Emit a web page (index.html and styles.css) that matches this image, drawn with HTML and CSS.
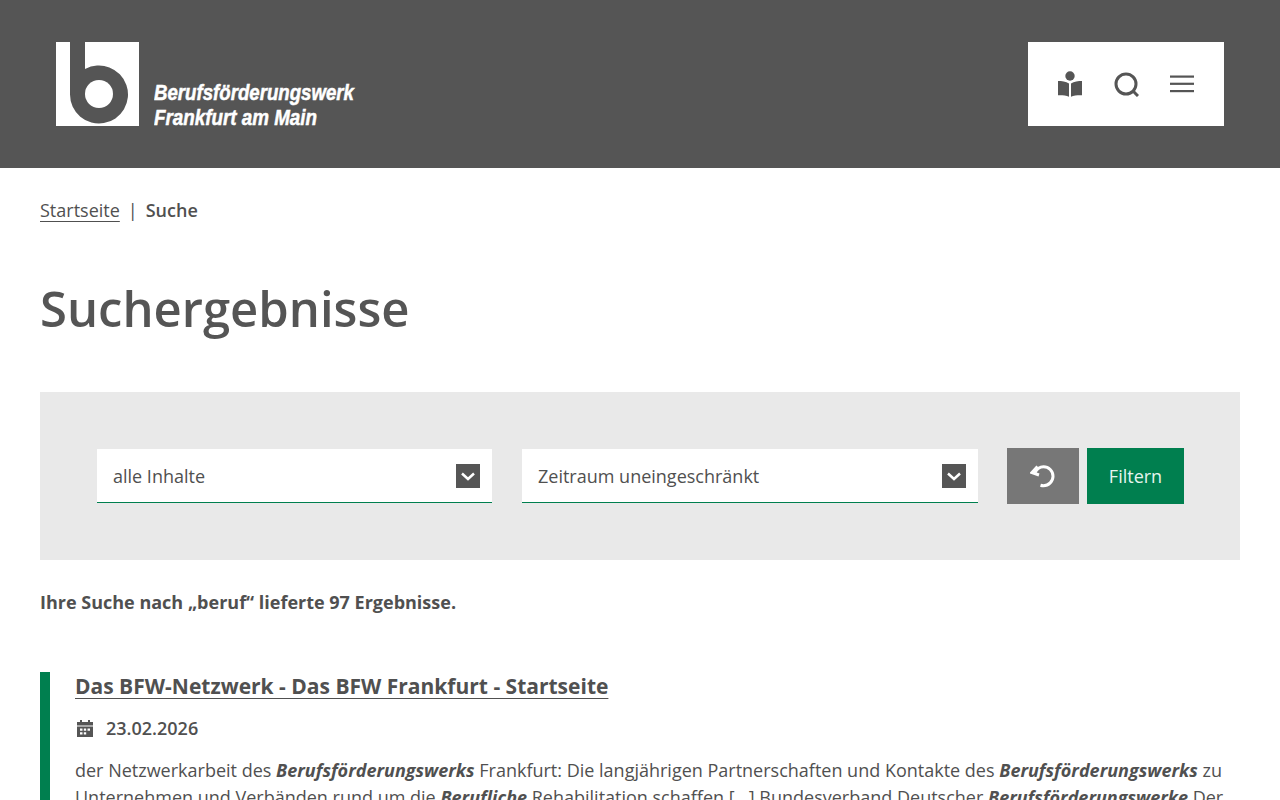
FILE: index.html
```html
<!DOCTYPE html>
<html lang="de">
<head>
<meta charset="utf-8">
<title>Suchergebnisse</title>
<link rel="stylesheet" href="styles.css">
</head>
<body>
<header class="site-header">
  <a class="logo" href="#">
    <svg class="logo-mark" width="83" height="84" viewBox="0 0 83 84">
      <rect width="83" height="84" fill="#fff"/>
      <path fill="#555" d="M14 0H29V27.100A29 29 0 1 1 14 52.500Z"/>
      <circle cx="43" cy="52" r="14" fill="#fff"/>
    </svg>
    <svg class="logo-text" width="204" height="58" viewBox="0 0 204 58">
      <text class="logo-line" x="0" y="24" textLength="200" lengthAdjust="spacingAndGlyphs">Berufsförderungswerk</text>
      <text class="logo-line" x="0" y="49" textLength="163" lengthAdjust="spacingAndGlyphs">Frankfurt am Main</text>
    </svg>
  </a>
  <nav class="tools">
    <a class="tool" href="#" aria-label="Lesen">
      <svg width="26" height="26" viewBox="0 0 26 26" fill="#555">
        <circle cx="13" cy="5" r="4.700"/>
        <path d="M1 10C4.500 10 9 10.500 12 12.500V25.700C9 24.300 4.500 24 1 24.200Z"/>
        <path d="M25 10C21.500 10 17 10.500 14 12.500V25.700C17 24.300 21.500 24 25 24.200Z"/>
      </svg>
    </a>
    <a class="tool" href="#" aria-label="Suche">
      <svg width="26" height="26" viewBox="0 0 26 26" fill="none" stroke="#555">
        <circle cx="13" cy="13" r="10" stroke-width="3"/>
        <path d="M20 20L25 25" stroke-width="3"/>
      </svg>
    </a>
    <a class="tool" href="#" aria-label="Menü">
      <svg width="26" height="26" viewBox="0 0 26 26" fill="#555">
        <rect x="1" y="4.500" width="24" height="2.200"/>
        <rect x="1" y="11.700" width="24" height="2.200"/>
        <rect x="1" y="19" width="24" height="2.200"/>
      </svg>
    </a>
  </nav>
</header>

<main class="content">
  <nav class="crumbs">
    <a class="crumb-link" href="#">Startseite</a>
    <span class="crumb-sep">|</span>
    <strong class="crumb-current">Suche</strong>
  </nav>

  <h1 class="page-title">Suchergebnisse</h1>

  <form class="filter">
    <div class="select select-type">
      <span>alle Inhalte</span>
      <span class="select-arrow">
        <svg width="24" height="24" viewBox="0 0 24 24" fill="none" stroke="#fff" stroke-width="2.500"><path d="M6 9.500L12 15L18 9.500"/></svg>
      </span>
    </div>
    <div class="select select-range">
      <span>Zeitraum uneingeschränkt</span>
      <span class="select-arrow">
        <svg width="24" height="24" viewBox="0 0 24 24" fill="none" stroke="#fff" stroke-width="2.500"><path d="M6 9.500L12 15L18 9.500"/></svg>
      </span>
    </div>
    <div class="buttons">
      <button class="btn btn-reset" type="button" aria-label="Zurücksetzen">
        <svg width="26" height="26" viewBox="0 0 26 26" fill="none" stroke="#fff" stroke-width="3">
          <path d="M5 9.500C7 5.500 10 3.700 13.500 3.700A9.500 9.500 0 0 1 13.500 22.700C12.500 22.700 11.500 22.500 10.500 22.200"/>
          <path d="M7.500 3.500L2 9.500L9 12"/>
        </svg>
      </button>
      <button class="btn btn-submit" type="button">Filtern</button>
    </div>
  </form>

  <p class="summary">Ihre Suche nach „beruf“ lieferte 97 Ergebnisse.</p>

  <article class="result">
    <h2 class="result-title"><a href="#">Das BFW-Netzwerk - Das BFW Frankfurt - Startseite</a></h2>
    <p class="result-date">
      <svg class="date-icon" width="16" height="17" viewBox="0 0 16 17" fill="#555">
        <path d="M3 0H5V2H11V0H13V2H16V5.500H0V2H3Z"/>
        <path fill-rule="evenodd" d="M0 6.500H16V17H0ZM3 8.500V10.800H5.500V8.500ZM6.800 8.500V10.800H9.200V8.500ZM10.500 8.500V10.800H13V8.500ZM3 12.300V14.600H5.500V12.300ZM6.800 12.300V14.600H9.200V12.300Z"/>
      </svg>
      <span>23.02.2026</span>
    </p>
    <p class="result-text">der Netzwerkarbeit des <b>Berufsförderungswerks</b> Frankfurt: Die langjährigen Partnerschaften und Kontakte des <b>Berufsförderungswerks</b> zu Unternehmen und Verbänden rund um die <b>Berufliche</b> Rehabilitation schaffen [...] Bundesverband Deutscher <b>Berufsförderungswerke</b> Der</p>
  </article>
</main>
</body>
</html>
```

FILE: styles.css
```css
* {
  box-sizing: border-box;
}

body {
  margin: 0;
  background: #fff;
  color: #505050;
  font-family: "Open Sans", sans-serif;
  font-size: 18px;
  line-height: 28px;
}

a {
  color: inherit;
}

.site-header {
  height: 168px;
  background: #555;
  padding: 42px 56px;
  display: flex;
  justify-content: space-between;
}

.logo {
  display: flex;
  align-items: flex-start;
  gap: 15px;
  text-decoration: none;
}

.logo-text {
  margin-top: 34px;
}

.logo-line {
  fill: #fff;
  stroke: #fff;
  stroke-width: 0.5px;
  font-family: "Liberation Sans", sans-serif;
  font-weight: 700;
  font-style: italic;
  font-size: 21.5px;
}

.tools {
  width: 196px;
  height: 84px;
  background: #fff;
  display: flex;
  align-items: center;
  padding-left: 29px;
  gap: 30px;
}

.tool {
  display: flex;
}

.content {
  padding: 28px 40px 0;
}

.crumbs {
  display: flex;
  gap: 8px;
  height: 28px;
}

.crumb-link {
  text-underline-offset: 4px;
  text-decoration-thickness: 1px;
}

.crumb-current {
  font-weight: 600;
}

.page-title {
  margin: 52px 0 0;
  font-size: 49px;
  line-height: 64px;
  font-weight: 600;
  color: #555;
}

.filter {
  margin-top: 52px;
  height: 168px;
  background: #e9e9e9;
  padding: 56px 56px 0 57px;
  display: flex;
  align-items: flex-start;
}

.select {
  height: 54px;
  margin-top: 1px;
  background: #fff;
  border-bottom: 1px solid #007f4f;
  padding: 0 12px 0 16px;
  display: flex;
  align-items: center;
  justify-content: space-between;
}

.select-type {
  width: 395px;
}

.select-range {
  width: 456px;
  margin-left: 30px;
}

.select-arrow {
  width: 24px;
  height: 24px;
  background: #555;
  display: flex;
}

.buttons {
  display: flex;
  gap: 8px;
  margin-left: 29px;
}

.btn {
  height: 56px;
  border: 0;
  padding: 0;
  color: #fff;
  font: inherit;
  display: flex;
  align-items: center;
  justify-content: center;
}

.btn-reset {
  width: 72px;
  background: #777;
}

.btn-submit {
  width: 97px;
  background: #007f4f;
  color: #e6f5ee;
}

.summary {
  margin: 28px 0 0;
  font-weight: 700;
}

.result {
  margin-top: 56px;
  border-left: 10px solid #007f4f;
  padding-left: 25px;
}

.result-title {
  margin: 0;
  font-size: 21px;
  line-height: 28px;
  font-weight: 700;
}

.result-title a {
  text-underline-offset: 4px;
  text-decoration-thickness: 1px;
}

.result-date {
  margin: 14px 0 0;
  display: flex;
  align-items: center;
  gap: 13px;
  font-weight: 600;
}

.date-icon {
  margin-left: 2px;
}

.result-text {
  margin: 15px 0 0;
  line-height: 27px;
  padding-bottom: 60px;
}

.result-text b {
  font-style: italic;
  font-weight: 700;
}
```
